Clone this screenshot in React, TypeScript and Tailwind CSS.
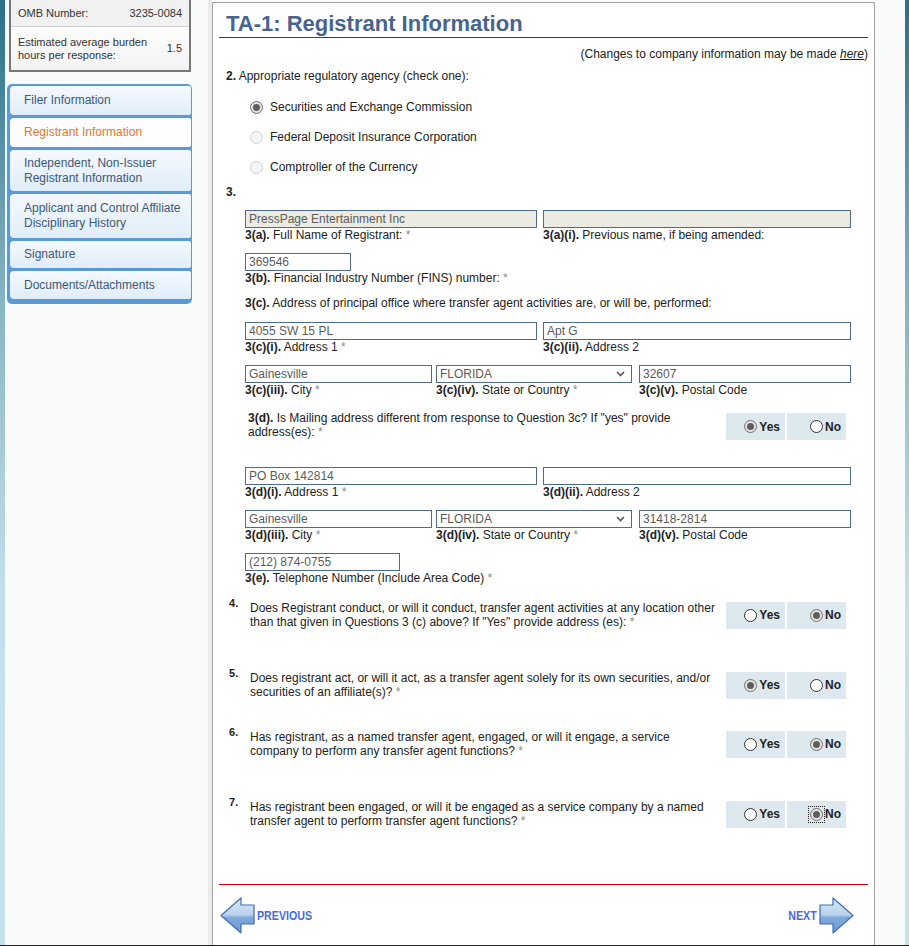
import type { ReactNode } from 'react';

type Mark = 'yes' | 'no';

const NAV_ITEMS: { label: ReactNode; h: string; active?: boolean }[] = [
  { label: 'Filer Information', h: 'h-[29px]' },
  { label: 'Registrant Information', h: 'h-[29px]', active: true },
  { label: <>Independent, Non-Issuer<br />Registrant Information</>, h: 'h-[41px]' },
  { label: <>Applicant and Control Affiliate<br />Disciplinary History</>, h: 'h-[44px]' },
  { label: 'Signature', h: 'h-[27px]' },
  { label: 'Documents/Attachments', h: 'h-[28px]' },
];

function Radio({ checked, faded }: { checked?: boolean; faded?: boolean }) {
  if (checked) {
    return (
      <span className="flex h-[13px] w-[13px] shrink-0 items-center justify-center rounded-full border border-[#6f6f6f] bg-[#e4e4e4]">
        <span className="h-[7px] w-[7px] rounded-full bg-[#5e5e5e]" />
      </span>
    );
  }
  return (
    <span
      className={`h-[13px] w-[13px] shrink-0 rounded-full border ${
        faded ? 'border-[#d2d2d2] bg-[#f4f4f4]' : 'border-[#333] bg-white'
      }`}
    />
  );
}

function Input({ value, w, disabled }: { value?: string; w: string; disabled?: boolean }) {
  return (
    <div
      className={`h-[18px] ${w} overflow-hidden whitespace-nowrap border border-[#4f6a8f] px-[3px] leading-[16px] text-[#5c5c5c] ${
        disabled ? 'bg-[#ebebe4]' : 'bg-white'
      }`}
    >
      {value}
    </div>
  );
}

function Select({ value, w }: { value: string; w: string }) {
  return (
    <div className={`flex h-[18px] ${w} items-center justify-between border border-[#4f6a8f] bg-white pl-[3px] pr-[6px] text-[#5c5c5c]`}>
      <span className="leading-[16px]">{value}</span>
      <svg width="9" height="6" viewBox="0 0 9 6">
        <path d="M1 1 L4.5 4.5 L8 1" fill="none" stroke="#555" strokeWidth="1.6" />
      </svg>
    </div>
  );
}

function Label({ code, children, req }: { code: string; children: ReactNode; req?: boolean }) {
  return (
    <div className="whitespace-nowrap">
      <span className="font-bold">{code}</span> {children}
      {req && <span className="text-[#8c8c8c]"> *</span>}
    </div>
  );
}

function Field({ code, label, req, children }: { code: string; label: string; req?: boolean; children: ReactNode }) {
  return (
    <div className="flex flex-col">
      {children}
      <Label code={code} req={req}>
        {label}
      </Label>
    </div>
  );
}

function YesNo({ value, focus, className = '' }: { value: Mark; focus?: boolean; className?: string }) {
  return (
    <div className={`mr-[22px] flex gap-[2px] font-bold ${className}`}>
      <div className="flex h-[27px] w-[59px] items-center justify-end gap-[2px] bg-[#dde9ef] pr-[5px]">
        <Radio checked={value === 'yes'} />
        <span>Yes</span>
      </div>
      <div className="flex h-[27px] w-[59px] items-center justify-end gap-[2px] bg-[#dde9ef] pr-[5px]">
        {focus ? (
          <span className="outline-1 outline-offset-[1px] outline-dotted outline-[#222]">
            <Radio checked={value === 'no'} />
          </span>
        ) : (
          <Radio checked={value === 'no'} />
        )}
        <span>No</span>
      </div>
    </div>
  );
}

function Question({ num, value, focus, className, children }: { num: number; value: Mark; focus?: boolean; className: string; children: ReactNode }) {
  return (
    <div className={`flex items-center ${className}`}>
      <div className="flex flex-1 items-start pl-[10px]">
        <span className="-mt-[5px] w-[21px] text-[11px] font-bold">{num}.</span>
        <div className="w-[468px]">
          {children}
          <span className="text-[#8c8c8c]"> *</span>
        </div>
      </div>
      <YesNo value={value} focus={focus} />
    </div>
  );
}

function Arrow({ flip }: { flip?: boolean }) {
  return (
    <svg width="35" height="37" viewBox="0 0 35 37" className={flip ? '-scale-x-100' : ''}>
      <defs>
        <linearGradient id={flip ? 'gn' : 'gp'} x1="0" y1="0" x2="0" y2="1">
          <stop offset="0" stopColor="#d9e8f7" />
          <stop offset="0.48" stopColor="#b9d2ee" />
          <stop offset="0.56" stopColor="#80a9dc" />
          <stop offset="1" stopColor="#6e9ad3" />
        </linearGradient>
      </defs>
      <path
        d="M1 18.5 L21 1 L21 8 L34 8 L34 27 L21 27 L21 36 Z"
        fill={`url(#${flip ? 'gn' : 'gp'})`}
        stroke="#3f6fae"
        strokeWidth="1.2"
        strokeLinejoin="round"
      />
    </svg>
  );
}

export default function App() {
  return (
    <div className="flex h-[946px] w-[909px] flex-col overflow-hidden bg-[#f9fbfb] font-['Liberation_Sans',Arial,sans-serif] text-[12px] leading-[14px] text-[#222]">
      <div className="flex min-h-0 flex-1">
        <div className="w-[5px] bg-[linear-gradient(to_bottom,#2b6f88_0%,#86b5c4_32%,#c3dfe9_62%,#c6e1ea_100%)]" />

        <aside className="w-[203px]">
          <div className="ml-[4px] w-[182px] border-x-2 border-b-2 border-[#777] text-[11px] leading-[13px] text-[#333]">
            <div className="flex h-[27px] items-center justify-between border-b border-[#cfcfcf] bg-[#f1f1f1] px-[7px]">
              <span>OMB Number:</span>
              <span>3235-0084</span>
            </div>
            <div className="flex h-[43px] items-center justify-between bg-linear-to-b from-[#fdfdfd] to-[#f3f3f3] pl-[7px] pr-[7px]">
              <span>
                Estimated average burden
                <br />
                hours per response:
              </span>
              <span>1.5</span>
            </div>
          </div>

          <nav className="ml-[2px] mt-[12px] flex w-[185px] flex-col gap-[3px] rounded-[5px] bg-[#5b9bd5] pb-[5px] pl-[3px] pr-[1px] pt-[2px]">
            {NAV_ITEMS.map((item, i) => (
              <div
                key={i}
                className={`flex ${item.h} items-center rounded-l-[4px] rounded-r-[2px] pl-[14px] leading-[15px] ${
                  item.active
                    ? 'bg-[#fbfdff] text-[#e8762b]'
                    : 'bg-linear-to-b from-[#f4f9fe] to-[#e0edf9] text-[#3d5877]'
                }`}
              >
                <span>{item.label}</span>
              </div>
            ))}
          </nav>
        </aside>

        <div className="w-[4px] bg-[#ebebeb]" />

        <main className="mt-[2px] w-[663px] border-x border-t border-[#a3a3a3] bg-white">
          <div className="mx-[6px]">
            <h1 className="pl-[7px] pt-[8px] text-[22px] font-bold leading-[26px] text-[#47648f]">TA-1: Registrant Information</h1>
            <div className="h-[1px] bg-[#d00000]" />
            <div className="mt-[9px] text-right">
              (Changes to company information may be made <span className="italic underline">here</span>)
            </div>
            <div className="mt-[8px] pl-[7px]">
              <span className="font-bold">2.</span> Appropriate regulatory agency (check one):
            </div>
            <div className="mt-[9px] pl-[31px]">
              <div className="flex h-[30px] items-center gap-[7px]">
                <Radio checked />
                <span>Securities and Exchange Commission</span>
              </div>
              <div className="flex h-[30px] items-center gap-[7px]">
                <Radio faded />
                <span>Federal Deposit Insurance Corporation</span>
              </div>
              <div className="flex h-[30px] items-center gap-[7px]">
                <Radio faded />
                <span>Comptroller of the Currency</span>
              </div>
            </div>
            <div className="mt-[3px] pl-[7px] font-bold">3.</div>

            <div className="ml-[26px] mt-[11px] flex gap-[6px]">
              <Field code="3(a)." label="Full Name of Registrant:" req>
                <Input w="w-[292px]" value="PressPage Entertainment Inc" disabled />
              </Field>
              <Field code="3(a)(i)." label="Previous name, if being amended:">
                <Input w="w-[308px]" disabled />
              </Field>
            </div>

            <div className="ml-[26px] mt-[11px]">
              <Field code="3(b)." label="Financial Industry Number (FINS) number:" req>
                <Input w="w-[106px]" value="369546" />
              </Field>
            </div>

            <div className="ml-[26px] mt-[11px]">
              <Label code="3(c).">Address of principal office where transfer agent activities are, or will be, performed:</Label>
            </div>

            <div className="ml-[26px] mt-[12px] flex gap-[6px]">
              <Field code="3(c)(i)." label="Address 1" req>
                <Input w="w-[292px]" value="4055 SW 15 PL" />
              </Field>
              <Field code="3(c)(ii)." label="Address 2">
                <Input w="w-[308px]" value="Apt G" />
              </Field>
            </div>

            <div className="ml-[26px] mt-[11px] flex">
              <Field code="3(c)(iii)." label="City" req>
                <Input w="w-[187px]" value="Gainesville" />
              </Field>
              <div className="ml-[4px]">
                <Field code="3(c)(iv)." label="State or Country" req>
                  <Select w="w-[196px]" value="FLORIDA" />
                </Field>
              </div>
              <div className="ml-[7px]">
                <Field code="3(c)(v)." label="Postal Code">
                  <Input w="w-[212px]" value="32607" />
                </Field>
              </div>
            </div>

            <div className="mt-[14px] flex items-start">
              <div className="flex-1 pl-[29px]">
                <div className="w-[468px]">
                  <span className="font-bold">3(d).</span> Is Mailing address different from response to Question 3c? If "yes" provide
                  address(es):<span className="text-[#8c8c8c]"> *</span>
                </div>
              </div>
              <YesNo value="yes" className="mt-[2px]" />
            </div>

            <div className="ml-[26px] mt-[27px] flex gap-[6px]">
              <Field code="3(d)(i)." label="Address 1" req>
                <Input w="w-[292px]" value="PO Box 142814" />
              </Field>
              <Field code="3(d)(ii)." label="Address 2">
                <Input w="w-[308px]" />
              </Field>
            </div>

            <div className="ml-[26px] mt-[11px] flex">
              <Field code="3(d)(iii)." label="City" req>
                <Input w="w-[187px]" value="Gainesville" />
              </Field>
              <div className="ml-[4px]">
                <Field code="3(d)(iv)." label="State or Country" req>
                  <Select w="w-[196px]" value="FLORIDA" />
                </Field>
              </div>
              <div className="ml-[7px]">
                <Field code="3(d)(v)." label="Postal Code">
                  <Input w="w-[212px]" value="31418-2814" />
                </Field>
              </div>
            </div>

            <div className="ml-[26px] mt-[11px]">
              <Field code="3(e)." label="Telephone Number (Include Area Code)" req>
                <Input w="w-[155px]" value="(212) 874-0755" />
              </Field>
            </div>

            <Question num={4} value="no" className="mt-[16px]">
              Does Registrant conduct, or will it conduct, transfer agent activities at any location other than that given in
              Questions 3 (c) above? If "Yes" provide address (es):
            </Question>
            <Question num={5} value="yes" className="mt-[42px]">
              Does registrant act, or will it act, as a transfer agent solely for its own securities, and/or securities of an
              affiliate(s)?
            </Question>
            <Question num={6} value="no" className="mt-[31px]">
              Has registrant, as a named transfer agent, engaged, or will it engage, a service company to perform any transfer
              agent functions?
            </Question>
            <Question num={7} value="no" focus className="mt-[42px]">
              Has registrant been engaged, or will it be engaged as a service company by a named transfer agent to perform
              transfer agent functions?
            </Question>

            <div className="mt-[56px] h-[1px] bg-[#d00000]" />

            <div className="mt-[12px] flex items-center justify-between pl-[1px] pr-[14px] text-[13px] font-bold text-[#4869e0]">
              <div className="flex items-center">
                <Arrow />
                <span className="ml-[2px] inline-block origin-left scale-x-[0.82] whitespace-nowrap">PREVIOUS</span>
              </div>
              <div className="flex items-center">
                <span className="mr-[2px] inline-block origin-right scale-x-[0.82] whitespace-nowrap">NEXT</span>
                <Arrow flip />
              </div>
            </div>
          </div>
        </main>

        <div className="w-[30px]" />
        <div className="w-[4px] bg-[linear-gradient(to_bottom,#2b6f88_0%,#86b5c4_32%,#c3dfe9_62%,#c6e1ea_100%)]" />
      </div>
      <div className="h-[1px] bg-[#222]" />
    </div>
  );
}
